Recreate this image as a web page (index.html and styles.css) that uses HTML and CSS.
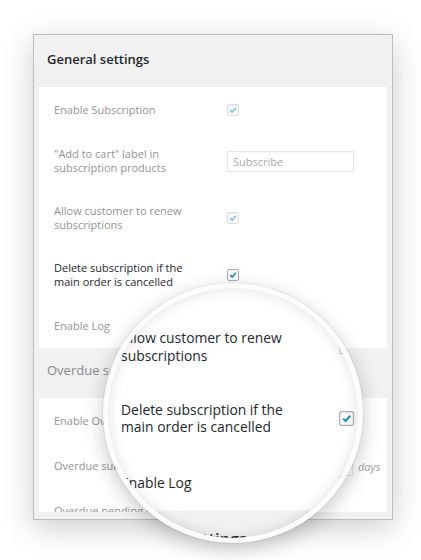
FILE: index.html
```html
<!DOCTYPE html>
<html>
<head>
<meta charset="utf-8">
<link rel="stylesheet" href="styles.css">
</head>
<body>
<div class="stage">
  <div class="panel">
    <div class="panel-head">General settings</div>
    <div class="section">
      <div class="row">
        <div class="label">Enable Subscription</div>
        <div class="field"><span class="cb on-faint"><svg viewBox="0 0 12 12"><path d="M2.7 6.1 L5 8.4 L9.5 3.4"/></svg></span></div>
      </div>
      <div class="row">
        <div class="label">"Add to cart" label in subscription products</div>
        <div class="field"><input class="text-in" type="text" placeholder="Subscribe"></div>
      </div>
      <div class="row">
        <div class="label">Allow customer to renew subscriptions</div>
        <div class="field"><span class="cb on-faint"><svg viewBox="0 0 12 12"><path d="M2.7 6.1 L5 8.4 L9.5 3.4"/></svg></span></div>
      </div>
      <div class="row">
        <div class="label dark">Delete subscription if the main order is cancelled</div>
        <div class="field"><span class="cb on"><svg viewBox="0 0 12 12"><path d="M2.7 6.1 L5 8.4 L9.5 3.4"/></svg></span></div>
      </div>
      <div class="row">
        <div class="label">Enable Log</div>
        <div class="field"><span class="cb"></span></div>
      </div>
    </div>
    <div class="panel-head faded">Overdue settings</div>
    <div class="section short">
      <div class="row">
        <div class="label">Enable Overdue time</div>
        <div class="field"><span class="cb"></span></div>
      </div>
      <div class="row">
        <div class="label">Overdue subscription after</div>
        <div class="field"><input class="text-in num" type="text"><span class="unit">days</span></div>
      </div>
      <div class="row">
        <div class="label">Overdue pending payment</div>
        <div class="field"></div>
      </div>
    </div>
  </div>

  <div class="lens">
    <div class="lens-view">
      <div class="panel lens-panel">
        <div class="panel-head">General settings</div>
        <div class="section">
          <div class="row">
            <div class="label">Enable Subscription</div>
            <div class="field"><span class="cb"></span></div>
          </div>
          <div class="row">
            <div class="label hidden">"Add to cart" label in subscription products</div>
            <div class="field"></div>
          </div>
          <div class="row">
            <div class="label">Allow customer to renew subscriptions</div>
            <div class="field"><span class="cb ghost"></span></div>
          </div>
          <div class="row">
            <div class="label">Delete subscription if the main order is cancelled</div>
            <div class="field"><span class="cb on"><svg viewBox="0 0 12 12"><path d="M2.7 6.1 L5 8.4 L9.5 3.4"/></svg></span></div>
          </div>
          <div class="row">
            <div class="label">Enable Log</div>
            <div class="field"><span class="cb ghost"></span></div>
          </div>
        </div>
        <div class="panel-head">Overdue settings</div>
        <div class="section short">
          <div class="row">
            <div class="label">Enable Overdue time</div>
            <div class="field"><span class="cb"></span></div>
          </div>
        </div>
      </div>
    </div>
  </div>
</div>
</body>
</html>
```

FILE: styles.css
```css
html, body {
  margin: 0;
  padding: 0;
  background: #ffffff;
}

body {
  font-family: "Open Sans", "Noto Sans", sans-serif;
}

.stage {
  position: relative;
  width: 421px;
  height: 560px;
  padding: 34px 0 0 33px;
  box-sizing: border-box;
  overflow: hidden;
}

.panel {
  width: 360px;
  height: 486px;
  box-sizing: border-box;
  border: 1px solid #bdbdbd;
  background: #f1f1f1;
  box-shadow: 0 8px 30px rgba(0, 0, 0, 0.2);
  overflow: hidden;
}

.panel-head {
  height: 52px;
  box-sizing: border-box;
  padding: 15px 13px 0;
  font-size: 13px;
  line-height: 18px;
  font-weight: 600;
  color: #23282d;
}

.panel-head.faded {
  height: 50px;
  padding-top: 13px;
  font-weight: 400;
  color: #8a8a8a;
}

.section {
  margin: 0 5px;
  padding: 0 15px;
  background: #ffffff;
}

.section.short {
  height: 114px;
  overflow: hidden;
}

.row {
  display: grid;
  grid-template-columns: 173px 1fr;
  align-items: center;
  padding: 15px 0 14px;
}

.label {
  font-size: 11px;
  line-height: 14px;
  color: #949494;
  padding-right: 20px;
}

.label.dark {
  color: #23282d;
}

.label.hidden {
  visibility: hidden;
}

.field {
  height: 16px;
  display: flex;
  align-items: center;
  gap: 5px;
}

.cb {
  width: 12px;
  height: 12px;
  box-sizing: border-box;
  border: 1px solid #dcdcdc;
  border-radius: 2px;
  background: #fbfbfb;
  box-shadow: inset 0 1px 2px rgba(0, 0, 0, 0.06);
  display: block;
  flex: none;
}

.cb svg {
  display: block;
  width: 10px;
  height: 10px;
}

.cb path {
  fill: none;
  stroke-width: 1.9;
  stroke-linecap: butt;
  stroke-linejoin: miter;
}

.cb.on-faint path {
  stroke: #7cc4e6;
}

.cb.on {
  border-color: #a9aeb3;
  background: #ffffff;
}

.cb.on path {
  stroke: #1e8cbe;
}

.cb.ghost {
  border-color: #d4d4d4;
  box-shadow: none;
}

.text-in {
  width: 127px;
  height: 21px;
  box-sizing: border-box;
  margin: 0;
  padding: 0 5px;
  border: 1px solid #e6e6e6;
  box-shadow: inset 0 1px 2px rgba(0, 0, 0, 0.04);
  background: #ffffff;
  font-family: "Open Sans", "Noto Sans", sans-serif;
  font-size: 11px;
  color: #555;
  outline: none;
}

.text-in::placeholder {
  color: #a8a8a8;
}

.text-in.num {
  width: 126px;
  height: 20px;
}

.unit {
  font-size: 11px;
  font-style: italic;
  color: #a0a0a0;
}

/* magnifier */
.lens {
  position: absolute;
  left: 103px;
  top: 283px;
  width: 260px;
  height: 260px;
  box-sizing: border-box;
  border: 5px solid #fcfcfc;
  border-radius: 50%;
  overflow: hidden;
  background: #ffffff;
  box-shadow: 0 0 0 1px rgba(0, 0, 0, 0.05), 0 6px 20px rgba(0, 0, 0, 0.22);
}

.lens::after {
  content: "";
  position: absolute;
  inset: 0;
  border-radius: 50%;
  box-shadow: inset 0 0 14px rgba(0, 0, 0, 0.13);
  pointer-events: none;
}

.lens-view {
  position: absolute;
  left: -108px;
  top: -288px;
  width: 421px;
  height: 560px;
  padding: 34px 0 0 33px;
  box-sizing: border-box;
  transform: translate(53px, 72px) scale(1.26);
  transform-origin: 0 0;
}

.lens-panel {
  box-shadow: none;
}

.lens-panel .label {
  color: #23282d;
}

.lens-panel .panel-head {
  height: 50px;
  padding-top: 13px;
}

.lens-panel .panel-head:first-child {
  height: 52px;
  padding-top: 15px;
}
```
